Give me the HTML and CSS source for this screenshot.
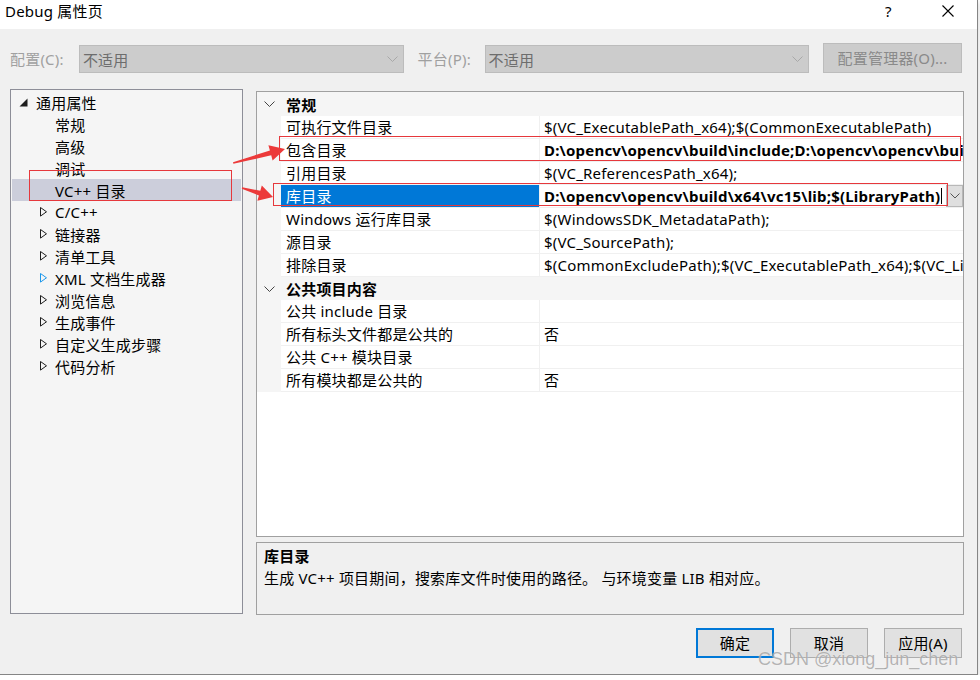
FILE: index.html
```html
<!DOCTYPE html>
<html lang="zh-CN">
<head>
    <meta charset="UTF-8">
    <title>Debug 属性页</title>
    <link rel="stylesheet" href="styles.css">
</head>
<body>
    <div class="window">
        <!-- Title bar -->
        <div class="titlebar">
            <span class="title">Debug 属性页</span>
            <span class="help">?</span>
            <span class="close">
                <svg width="12" height="12" viewBox="0 0 12 12"><path d="M0.5 0.5 L11.5 11.5 M11.5 0.5 L0.5 11.5" stroke="#000" stroke-width="1.1" fill="none"/></svg>
            </span>
        </div>

        <div class="body">
            <!-- Configuration / platform row -->
            <div class="toolbar">
                <span class="label">配置(C):</span>
                <div class="combo">
                    <span>不适用</span>
                    <svg width="11" height="6" viewBox="0 0 11 6"><path d="M0.5 0.5 L5.5 5.5 L10.5 0.5" stroke="#a8a8a8" fill="none"/></svg>
                </div>
                <span class="label label2">平台(P):</span>
                <div class="combo">
                    <span>不适用</span>
                    <svg width="11" height="6" viewBox="0 0 11 6"><path d="M0.5 0.5 L5.5 5.5 L10.5 0.5" stroke="#a8a8a8" fill="none"/></svg>
                </div>
                <div class="mgr-btn">配置管理器(O)...</div>
            </div>

            <div class="main">
                <!-- Tree -->
                <div class="tree">
                    <div class="node root">
                        <span class="twisty"><svg width="9" height="9" viewBox="0 0 9 9"><path d="M8.5 0.5 L8.5 8.5 L0.5 8.5 Z" fill="#1e1e1e"/></svg></span>
                        <span>通用属性</span>
                    </div>
                    <div class="node leaf">常规</div>
                    <div class="node leaf">高级</div>
                    <div class="node leaf">调试</div>
                    <div class="node leaf selected">VC++ 目录</div>
                    <div class="node child">
                        <span class="twisty"><svg width="8" height="10" viewBox="0 0 8 10"><path d="M0.5 0.5 L6.5 4.8 L0.5 9.1 Z" fill="none" stroke="#1e1e1e"/></svg></span>
                        <span>C/C++</span>
                    </div>
                    <div class="node child">
                        <span class="twisty"><svg width="8" height="10" viewBox="0 0 8 10"><path d="M0.5 0.5 L6.5 4.8 L0.5 9.1 Z" fill="none" stroke="#1e1e1e"/></svg></span>
                        <span>链接器</span>
                    </div>
                    <div class="node child">
                        <span class="twisty"><svg width="8" height="10" viewBox="0 0 8 10"><path d="M0.5 0.5 L6.5 4.8 L0.5 9.1 Z" fill="none" stroke="#1e1e1e"/></svg></span>
                        <span>清单工具</span>
                    </div>
                    <div class="node child">
                        <span class="twisty"><svg width="8" height="10" viewBox="0 0 8 10"><path d="M0.5 0.5 L6.5 4.8 L0.5 9.1 Z" fill="none" stroke="#1c97ea"/></svg></span>
                        <span>XML 文档生成器</span>
                    </div>
                    <div class="node child">
                        <span class="twisty"><svg width="8" height="10" viewBox="0 0 8 10"><path d="M0.5 0.5 L6.5 4.8 L0.5 9.1 Z" fill="none" stroke="#1e1e1e"/></svg></span>
                        <span>浏览信息</span>
                    </div>
                    <div class="node child">
                        <span class="twisty"><svg width="8" height="10" viewBox="0 0 8 10"><path d="M0.5 0.5 L6.5 4.8 L0.5 9.1 Z" fill="none" stroke="#1e1e1e"/></svg></span>
                        <span>生成事件</span>
                    </div>
                    <div class="node child">
                        <span class="twisty"><svg width="8" height="10" viewBox="0 0 8 10"><path d="M0.5 0.5 L6.5 4.8 L0.5 9.1 Z" fill="none" stroke="#1e1e1e"/></svg></span>
                        <span>自定义生成步骤</span>
                    </div>
                    <div class="node child">
                        <span class="twisty"><svg width="8" height="10" viewBox="0 0 8 10"><path d="M0.5 0.5 L6.5 4.8 L0.5 9.1 Z" fill="none" stroke="#1e1e1e"/></svg></span>
                        <span>代码分析</span>
                    </div>
                </div>

                <div class="right">
                    <!-- Property grid -->
                    <div class="grid">
                        <div class="cat first">
                            <span class="gut"><svg width="11" height="6" viewBox="0 0 11 6"><path d="M0.5 0.5 L5.5 5.5 L10.5 0.5" stroke="#444" fill="none"/></svg></span>
                            <span class="cat-name">常规</span>
                        </div>
                        <div class="prop"><span class="gut"></span><span class="name">可执行文件目录</span><span class="val">$(VC_ExecutablePath_x64);$(CommonExecutablePath)</span></div>
                        <div class="prop"><span class="gut"></span><span class="name">包含目录</span><span class="val bold">D:\opencv\opencv\build\include;D:\opencv\opencv\build\include\opencv2;$(IncludePath)</span></div>
                        <div class="prop"><span class="gut"></span><span class="name">引用目录</span><span class="val">$(VC_ReferencesPath_x64);</span></div>
                        <div class="prop sel">
                            <span class="gut"></span><span class="name">库目录</span>
                            <span class="val bold edit">
                                <span class="edit-text">D:\opencv\opencv\build\x64\vc15\lib;$(LibraryPath)</span>
                                <span class="caret"></span>
                                <span class="drop"><svg width="10" height="6" viewBox="0 0 10 6"><path d="M0.5 0.5 L5 5 L9.5 0.5" stroke="#555" fill="none"/></svg></span>
                            </span>
                        </div>
                        <div class="prop"><span class="gut"></span><span class="name">Windows 运行库目录</span><span class="val">$(WindowsSDK_MetadataPath);</span></div>
                        <div class="prop"><span class="gut"></span><span class="name">源目录</span><span class="val">$(VC_SourcePath);</span></div>
                        <div class="prop"><span class="gut"></span><span class="name">排除目录</span><span class="val">$(CommonExcludePath);$(VC_ExecutablePath_x64);$(VC_LibraryPath_x64)</span></div>
                        <div class="cat">
                            <span class="gut"><svg width="11" height="6" viewBox="0 0 11 6"><path d="M0.5 0.5 L5.5 5.5 L10.5 0.5" stroke="#444" fill="none"/></svg></span>
                            <span class="cat-name">公共项目内容</span>
                        </div>
                        <div class="prop"><span class="gut"></span><span class="name">公共 include 目录</span><span class="val"></span></div>
                        <div class="prop"><span class="gut"></span><span class="name">所有标头文件都是公共的</span><span class="val">否</span></div>
                        <div class="prop"><span class="gut"></span><span class="name">公共 C++ 模块目录</span><span class="val"></span></div>
                        <div class="prop"><span class="gut"></span><span class="name">所有模块都是公共的</span><span class="val">否</span></div>
                    </div>

                    <!-- Description -->
                    <div class="desc">
                        <div class="desc-title">库目录</div>
                        <div>生成 VC++ 项目期间，搜索库文件时使用的路径。 与环境变量 LIB 相对应。</div>
                    </div>
                </div>
            </div>

            <div class="footer">
                <div class="btn default">确定</div>
                <div class="btn">取消</div>
                <div class="btn">应用(A)</div>
            </div>
        </div>

        <!-- red annotations drawn over the screenshot -->
        <svg class="marks" width="980" height="680" viewBox="0 0 980 680">
            <rect x="29.5" y="170.5" width="202" height="30" fill="none" stroke="#e6383c"/>
            <rect x="279.5" y="136.5" width="681" height="24" fill="none" stroke="#e6383c"/>
            <rect x="273.5" y="183.5" width="674" height="22" fill="none" stroke="#e6383c"/>
            <polygon points="233,162.2 269.9,150.5 268.4,145.2 285,149 272.6,160.6 271.2,155.3 233.4,163.8" fill="#ec3a3a"/>
            <polygon points="242.2,187.3 260.3,190.7 261.8,185.4 273,197 257.4,200.8 258.9,195.5 241.8,188.7" fill="#ec3a3a"/>
        </svg>
        <div class="watermark">CSDN @xiong_jun_chen</div>
    </div>
</body>
</html>
```

FILE: styles.css
```css
* {
    box-sizing: border-box;
}

body, html {
    margin: 0;
    padding: 0;
    background-color: #ffffff;
    color: #000000;
    font-family: "Noto Sans", "Noto Sans CJK SC", sans-serif;
    font-size: 15px;
    letter-spacing: 0.2px;
}

.window {
    position: relative;
    width: 978px;
    height: 675px;
    display: flex;
    flex-direction: column;
    border-right: 1px solid #858585;
    border-bottom: 1px solid #858585;
    box-shadow: 1px 2px 5px rgba(0, 0, 0, 0.15);
}

/* Title bar */
.titlebar {
    height: 29px;
    flex: none;
    display: flex;
    align-items: flex-start;
    padding: 1px 0 0 5px;
    background-color: #ffffff;
}

.title {
    line-height: 20px;
}

.help {
    margin-left: auto;
    width: 14px;
    line-height: 20px;
    font-size: 15px;
}

.close {
    margin-left: 43px;
    margin-right: 23px;
    padding-top: 4px;
    display: flex;
}

.body {
    flex: 1;
    display: flex;
    flex-direction: column;
    padding: 14px 15px 0 10px;
    background-color: #f0f0f0;
}

/* Config row */
.toolbar {
    display: flex;
    align-items: flex-end;
    height: 30px;
}

.label {
    width: 69px;
    height: 28px;
    line-height: 28px;
    color: #a0a0a0;
}

.label2 {
    width: 67px;
    margin-left: 14px;
}

.combo {
    width: 325px;
    height: 28px;
    display: flex;
    align-items: center;
    justify-content: space-between;
    padding: 0 5px 0 3px;
    border: 1px solid #bcbcbc;
    background-color: #cccccc;
    color: #6d6d6d;
}

.mgr-btn {
    width: 139px;
    height: 30px;
    margin-left: 14px;
    line-height: 28px;
    text-align: center;
    border: 1px solid #bcbcbc;
    background-color: #cccccc;
    color: #8a8a8a;
}

.main {
    display: flex;
    margin-top: 16px;
}

/* Tree */
.tree {
    flex: none;
    width: 233px;
    height: 525px;
    padding: 1px;
    border: 1px solid #8d8e98;
    background-color: #f5f5f5;
}

.node {
    height: 22px;
    display: flex;
    align-items: center;
    white-space: nowrap;
}

.node .twisty {
    width: 19px;
    display: flex;
    align-items: center;
}

.root {
    padding-left: 5px;
}

.root .twisty {
    padding-left: 2px;
}

.child {
    padding-left: 24px;
}

.child .twisty {
    padding-left: 4px;
}

.leaf {
    padding-left: 43px;
}

.selected {
    background-color: #cccedb;
}

/* Right side */
.right {
    flex: none;
    width: 708px;
    margin-left: 13px;
    margin-top: 2px;
    display: flex;
    flex-direction: column;
    gap: 5px;
}

.grid {
    height: 446px;
    border: 1px solid #a0a0a0;
    background-color: #ffffff;
    overflow: hidden;
}

.gut {
    width: 24px;
    flex: none;
    display: flex;
    align-items: center;
    padding-left: 7px;
    align-self: stretch;
    background-color: #f5f5f5;
}

.cat {
    height: 23px;
    display: flex;
    align-items: center;
    background-color: #f5f5f5;
    font-weight: bold;
}

.cat.first {
    height: 24px;
}

.cat-name {
    padding-left: 5px;
}

.prop {
    height: 23px;
    display: flex;
}

.prop .name {
    width: 259px;
    flex: none;
    padding-left: 5px;
    line-height: 22px;
    white-space: nowrap;
    border-right: 1px solid #f0f0f0;
    border-bottom: 1px solid #f0f0f0;
}

.prop .val {
    flex: 1;
    min-width: 0;
    padding-left: 4px;
    line-height: 22px;
    white-space: nowrap;
    overflow: hidden;
    border-bottom: 1px solid #f0f0f0;
}

.bold {
    font-weight: bold;
}

.sel .name {
    background-color: #0078d7;
    color: #ffffff;
}

.edit {
    display: flex;
    align-items: stretch;
}

.edit-text {
    flex: none;
}

.caret {
    width: 1px;
    margin: 3px 0 3px 1px;
    background-color: #000000;
}

.drop {
    width: 17px;
    margin-left: auto;
    display: flex;
    align-items: center;
    justify-content: center;
    border: 1px solid #b8b8b8;
    background-color: #dfdfdf;
}

/* Description */
.desc {
    height: 73px;
    padding: 2px 7px;
    line-height: 22px;
    border: 1px solid #a0a0a0;
    background-color: #f0f0f0;
}

.desc-title {
    font-weight: bold;
}

/* Dialog buttons */
.footer {
    display: flex;
    justify-content: flex-end;
    gap: 16px;
    margin-top: 13px;
}

.btn {
    width: 78px;
    height: 30px;
    line-height: 28px;
    text-align: center;
    border: 1px solid #adadad;
    background-color: #e1e1e1;
}

.btn.default {
    border: 2px solid #0078d7;
    line-height: 26px;
}

/* Annotations over the screenshot */
.marks {
    position: absolute;
    top: 0;
    left: 0;
    pointer-events: none;
}

.watermark {
    position: absolute;
    left: 758px;
    top: 649px;
    font-family: "Liberation Sans", sans-serif;
    font-size: 18px;
    letter-spacing: 0;
    color: rgba(120, 120, 120, 0.55);
    text-shadow: 0 0 1px rgba(255, 255, 255, 0.8);
    white-space: nowrap;
}
```
